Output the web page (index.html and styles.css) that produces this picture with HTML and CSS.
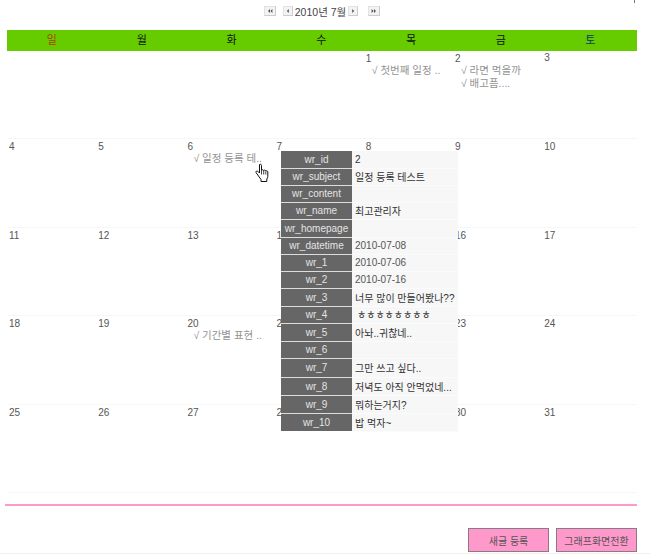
FILE: index.html
```html
<!DOCTYPE html>
<html lang="ko">
<head>
<meta charset="utf-8">
<title>일정</title>
<link rel="stylesheet" href="styles.css">
</head>
<body>
<div class="stray"></div>
<nav class="pager">
  <span class="nav-btn nav-wide"><svg viewBox="0 0 12 10" class="nav-ico"><path d="M6 2.500 3.500 5 6 7.500ZM9 2.500 6.500 5 9 7.500Z"/></svg></span>
  <span class="nav-btn"><svg viewBox="0 0 9 10" class="nav-ico nav-ico-s"><path d="M5.500 2.500 3 5 5.500 7.500Z"/></svg></span>
  <span class="pager-label">2010년 7월</span>
  <span class="nav-btn"><svg viewBox="0 0 9 10" class="nav-ico nav-ico-s"><path d="M3.500 2.500 6 5 3.500 7.500Z"/></svg></span>
  <span class="nav-btn nav-wide"><svg viewBox="0 0 12 10" class="nav-ico"><path d="M3 2.500 5.500 5 3 7.500ZM6 2.500 8.500 5 6 7.500Z"/></svg></span>
</nav>

<div class="weekdays">
  <div class="wd sun">일</div><div class="wd">월</div><div class="wd">화</div><div class="wd">수</div><div class="wd">목</div><div class="wd">금</div><div class="wd sat">토</div>
</div>

<div class="month">
  <div class="cell first"></div><div class="cell first"></div><div class="cell first"></div><div class="cell first"></div>
  <div class="cell first has-ev"><div class="num">1</div><div class="ev">√ 첫번째 일정 ..</div></div>
  <div class="cell first has-ev"><div class="num">2</div><div class="ev">√ 라면 먹을까</div><div class="ev">√ 배고픔....</div></div>
  <div class="cell first"><div class="num">3</div></div>

  <div class="cell"><div class="num">4</div></div>
  <div class="cell"><div class="num">5</div></div>
  <div class="cell has-ev"><div class="num">6</div><div class="ev">√ 일정 등록 테..</div></div>
  <div class="cell"><div class="num">7</div></div>
  <div class="cell"><div class="num">8</div></div>
  <div class="cell"><div class="num">9</div></div>
  <div class="cell"><div class="num">10</div></div>

  <div class="cell"><div class="num">11</div></div>
  <div class="cell"><div class="num">12</div></div>
  <div class="cell"><div class="num">13</div></div>
  <div class="cell"><div class="num">14</div></div>
  <div class="cell"><div class="num">15</div></div>
  <div class="cell"><div class="num">16</div></div>
  <div class="cell"><div class="num">17</div></div>

  <div class="cell"><div class="num">18</div></div>
  <div class="cell"><div class="num">19</div></div>
  <div class="cell has-ev"><div class="num">20</div><div class="ev">√ 기간별 표현 ..</div></div>
  <div class="cell"><div class="num">21</div></div>
  <div class="cell"><div class="num">22</div></div>
  <div class="cell"><div class="num">23</div></div>
  <div class="cell"><div class="num">24</div></div>

  <div class="cell"><div class="num">25</div></div>
  <div class="cell"><div class="num">26</div></div>
  <div class="cell"><div class="num">27</div></div>
  <div class="cell"><div class="num">28</div></div>
  <div class="cell"><div class="num">29</div></div>
  <div class="cell"><div class="num">30</div></div>
  <div class="cell"><div class="num">31</div></div>
</div>

<div class="pink-rule"></div>

<div class="actions">
  <button class="btn btn-new">새글 등록</button>
  <button class="btn btn-switch">그래프화면전환</button>
</div>
<div class="foot-line"></div>

<table class="pop">
  <tr><th>wr_id</th><td>2</td></tr>
  <tr><th>wr_subject</th><td>일정 등록 테스트</td></tr>
  <tr><th>wr_content</th><td></td></tr>
  <tr><th>wr_name</th><td>최고관리자</td></tr>
  <tr class="tall"><th>wr_homepage</th><td></td></tr>
  <tr><th>wr_datetime</th><td class="plain">2010-07-08</td></tr>
  <tr><th>wr_1</th><td class="plain">2010-07-06</td></tr>
  <tr><th>wr_2</th><td class="plain">2010-07-16</td></tr>
  <tr class="tall"><th>wr_3</th><td>너무 많이 만들어봤나??</td></tr>
  <tr><th>wr_4</th><td class="hh">ㅎㅎㅎㅎㅎㅎㅎㅎ</td></tr>
  <tr class="tall"><th>wr_5</th><td>아놔..귀찮네..</td></tr>
  <tr><th>wr_6</th><td></td></tr>
  <tr class="taller"><th>wr_7</th><td>그만 쓰고 싶다..</td></tr>
  <tr class="tall"><th>wr_8</th><td>저녁도 아직 안먹었네...</td></tr>
  <tr class="tall"><th>wr_9</th><td>뭐하는거지?</td></tr>
  <tr class="tall"><th>wr_10</th><td>밥 먹자~</td></tr>
</table>

<svg class="hand" viewBox="0 0 15 21">
  <path d="M4.500 1.500c1 -.8 2 0 2 1v5c.3-1 2-1 2.200.2.400-1 2-.8 2.100.4.500-.7 2-.4 2 .8v4.600c0 1-.5 1.700-1 2.500v2.500H6v-2l-2.500-3.500L1 9.500c-.5-1 .8-2 1.800-1.200l1.700 1.700z" fill="#fff" stroke="#111" stroke-width="1"/>
  <path d="M6.500 7.500v4M8.700 8v3.500M10.800 8.500v3" stroke="#111" stroke-width=".8" fill="none"/>
</svg>
</body>
</html>
```

FILE: styles.css
```css
* { box-sizing: border-box; }
html, body { margin: 0; padding: 0; }
body {
  position: relative;
  width: 650px;
  height: 554px;
  overflow: hidden;
  background: #fff;
  color: #555;
  font-family: "Liberation Sans", "Noto Sans CJK KR", sans-serif;
  font-size: 10px;
}
.stray {
  position: absolute;
  left: 634px;
  top: 0;
  width: 1px;
  height: 3px;
  background: #777;
}
.pager {
  height: 30px;
  padding: 5px 0 0 264px;
  display: flex;
  align-items: flex-start;
}
.nav-btn {
  width: 10px;
  height: 10px;
  margin-top: 1px;
  background: #f3f3f3;
  border: 1px solid #e2e2e2;
  border-right-color: #ccc;
  border-bottom-color: #ccc;
  display: flex;
}
.nav-wide { width: 12px; }
.nav-btn:nth-child(2) { margin-left: 7px; }
.nav-btn:nth-child(5) { margin-left: 10px; }
.nav-ico { width: 10px; height: 8px; fill: #555; }
.nav-ico-s { width: 8px; }
.pager-label {
  width: 55px;
  padding-top: 1px;
  text-align: center;
  font-size: 10.500px;
  line-height: 13px;
  color: #444;
  white-space: nowrap;
}
.weekdays {
  margin-left: 7px;
  width: 630px;
  height: 21px;
  display: grid;
  grid-template-columns: repeat(6, 89.800px) 89px 1fr;
  background: #66cc00;
  color: #111;
  font-size: 11px;
  line-height: 20px;
  text-align: center;
}
.wd.sun { color: #b33a00; }
.wd.sat { color: #0a3a66; }
.month {
  margin-left: 7px;
  width: 630px;
  height: 442px;
  display: grid;
  grid-template-columns: repeat(6, 89.200px) 1fr;
  grid-template-rows: 88px 89px 88px 89px 88px;
}
.cell {
  padding: 0 0 0 2px;
  border-bottom: 1px solid #f6f6f6;
  font-size: 10px;
  color: #555;
}
.num { line-height: 13px; height: 14px; padding-top: 1px; }
.first .num { padding-top: 0; }
.has-ev .num { height: 12px; margin-top: 1px; padding-top: 0; }
.first.has-ev .num { margin-top: 1px; }
.ev {
  margin-left: 6px;
  color: #939393;
  font-size: 10.500px;
  line-height: 13px;
  white-space: nowrap;
}
.pink-rule {
  margin: 11px 13px 0 5px;
  height: 2px;
  background: #ff99cc;
}
.actions {
  margin: 22px 13px 0 0;
  display: flex;
  justify-content: flex-end;
  gap: 7px;
}
.btn {
  width: 81px;
  height: 24px;
  padding: 0;
  background: #ff99cc;
  border: 1px solid #8a7a86;
  color: #555;
  font-family: inherit;
  font-size: 10px;
}
.foot-line {
  margin-top: 1px;
  height: 1px;
  background: #f3f0ea;
}
.pop {
  position: absolute;
  left: 281px;
  top: 151px;
  width: 177px;
  height: 280px;
  border-collapse: collapse;
  table-layout: fixed;
  font-size: 10px;
}
.pop tr { height: 17px; }
.pop tr.tall { height: 18px; }
.pop tr.taller { height: 19px; }
.pop th {
  width: 71px;
  padding: 0;
  background: #666;
  color: #e4e4e4;
  font-weight: normal;
  text-align: center;
  border-bottom: 1px solid #ddd;
}
.pop tr:last-child th { border-bottom: 0; }
.pop td {
  padding: 0 0 0 3px;
  background: #f7f7f7;
  color: #333;
  border-bottom: 1px solid #fbfbfb;
  white-space: nowrap;
  overflow: hidden;
}
.pop td.plain { color: #555; }
.pop td.hh { padding-left: 5px; }
.hand {
  position: absolute;
  left: 255px;
  top: 163px;
  width: 15px;
  height: 21px;
}
```
